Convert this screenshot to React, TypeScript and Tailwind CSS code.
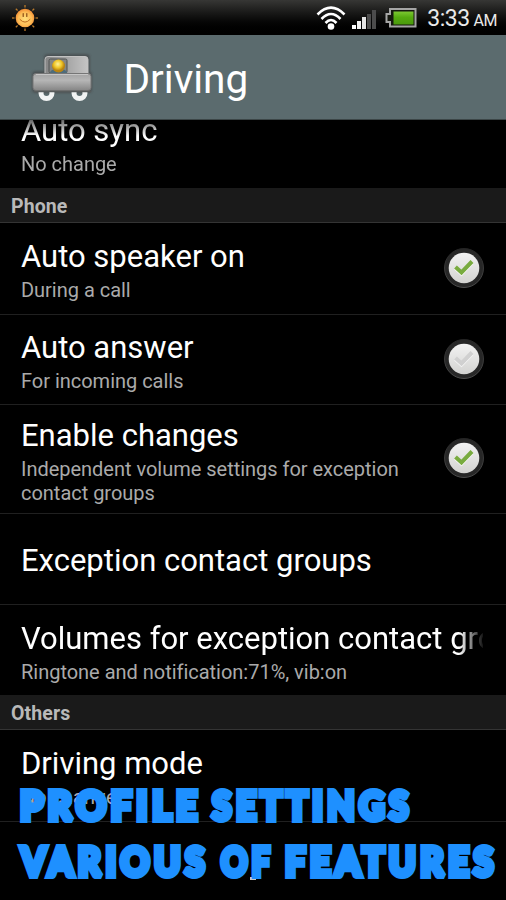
import { ReactNode } from "react";

function SunIcon() {
  const rays = [0, 45, 90, 135, 180, 225, 270, 315];
  return (
    <svg width="28" height="28" viewBox="0 0 28 28">
      <defs>
        <radialGradient id="sun" cx="50%" cy="55%" r="60%">
          <stop offset="0" stopColor="#ffdf7c" />
          <stop offset="0.6" stopColor="#fdbb54" />
          <stop offset="1" stopColor="#ee7d2a" />
        </radialGradient>
      </defs>
      {rays.map((r) => (
        <path key={r} d="M14 1v2.500" stroke="#b97a2c" strokeWidth="1.300" transform={`rotate(${r} 14 14)`} />
      ))}
      <circle cx="14" cy="14" r="9.300" fill="url(#sun)" />
      <path d="M12.200 9.500v3M15.800 9.500v3" stroke="#8a4b16" strokeWidth="1.200" strokeLinecap="round" />
      <path d="M9 15.500q5 5.500 10 0" stroke="#bd6a20" strokeWidth="1" fill="none" strokeLinecap="round" />
    </svg>
  );
}

function WifiIcon() {
  return (
    <svg width="30" height="26" viewBox="0 0 30 26" fill="none" stroke="#fff" strokeWidth="2.600">
      <path d="M1.500 9.500Q15-4 28.500 9.500" />
      <path d="M5.500 14Q15 4 24.500 14" />
      <path d="M9.500 18Q15 12 20.500 18" />
      <circle cx="15" cy="21.500" r="3.300" fill="#fff" stroke="none" />
    </svg>
  );
}

function SignalIcon() {
  return (
    <svg width="24" height="20" viewBox="0 0 24 20">
      <path d="M0 16h4v4H0z" fill="#fff" />
      <path d="M5 12h4v8H5z" fill="#f2f2f2" />
      <path d="M10 8h4v12h-4z" fill="#e4e4e4" />
      <path d="M15 5h4v15h-4z" fill="#4c4c4c" />
      <path d="M20 1h4v19h-4z" fill="#4c4c4c" />
    </svg>
  );
}

function BatteryIcon() {
  return (
    <svg width="32" height="20" viewBox="0 0 32 20">
      <defs>
        <linearGradient id="charge" x2="0" y2="1">
          <stop offset="0" stopColor="#7cc832" />
          <stop offset="0.45" stopColor="#55aa10" />
          <stop offset="1" stopColor="#4a9a0c" />
        </linearGradient>
      </defs>
      <path d="M5 1h25.500v17.500H5V14H1.500V6H5z" fill="#15170f" stroke="#a5a5a5" strokeWidth="2" />
      <path d="M8.500 3.500h20v13h-20z" fill="url(#charge)" />
    </svg>
  );
}

function CarIcon() {
  return (
    <svg width="68" height="56" viewBox="0 0 68 56">
      <defs>
        <linearGradient id="body" x2="0" y2="1">
          <stop offset="0" stopColor="#a2a2a2" />
          <stop offset="0.4" stopColor="#b6b6b6" />
          <stop offset="1" stopColor="#858585" />
        </linearGradient>
        <linearGradient id="cab">
          <stop offset="0" stopColor="#858585" />
          <stop offset="1" stopColor="#c4c4c4" />
        </linearGradient>
        <radialGradient id="head" cx="45%" cy="35%">
          <stop offset="0" stopColor="#fff39a" />
          <stop offset="0.6" stopColor="#efc526" />
          <stop offset="1" stopColor="#b98412" />
        </radialGradient>
        <filter id="glow" x="-20%" y="-20%" width="140%" height="140%">
          <feGaussianBlur stdDeviation="1.300" />
        </filter>
      </defs>
      <g filter="url(#glow)" fill="#4b5152">
        <rect x="14" y="3" width="46" height="22" rx="4" />
        <rect x="2" y="20" width="60" height="22" rx="4" />
      </g>
      <g fill="none" stroke="#f1f3f3" strokeWidth="5">
        <circle cx="16.500" cy="42" r="5.500" />
        <circle cx="49.500" cy="42" r="5.500" />
      </g>
      <rect x="15" y="5.500" width="43" height="20" rx="3" fill="url(#cab)" stroke="#c2c2c2" />
      <rect x="19" y="8" width="18" height="14" rx="1.500" fill="#858684" stroke="#505352" />
      <path d="M20 22q0-4 8.500-4t8.500 4z" fill="#4d6c7c" />
      <circle cx="28.500" cy="15" r="6.500" fill="url(#head)" />
      <rect x="3" y="22.500" width="58" height="17" rx="3" fill="url(#body)" stroke="#767676" />
      <path d="M6 23.500h52" stroke="#c6c6c6" />
      <path d="M4 40.500h57" stroke="#575b5b" strokeWidth="1.500" />
    </svg>
  );
}

function Check({ on }: { on: boolean }) {
  return (
    <svg className="shrink-0" width="42" height="42" viewBox="0 0 42 42">
      <defs>
        <linearGradient id="knob" x2="0" y2="1">
          <stop offset="0" stopColor="#f2f2f2" />
          <stop offset="1" stopColor="#d3d3d1" />
        </linearGradient>
        <linearGradient id="ring" x2="0" y2="1">
          <stop offset="0" stopColor="#242424" />
          <stop offset="1" stopColor="#4c4c4c" />
        </linearGradient>
      </defs>
      <circle cx="21" cy="21" r="19.500" fill="#272727" stroke="url(#ring)" />
      <circle cx="21" cy="21" r="15.300" fill="url(#knob)" />
      <path d="M12.500 20l6 5.500L29 14.500" transform="translate(0 1)" fill="none" stroke={on ? "#fafafa" : "#f6f6f6"} strokeWidth="4" />
      <path d="M12.500 20l6 5.500L29 14.500" fill="none" stroke={on ? "#78ab3f" : "#d0d0d0"} strokeWidth="4" />
    </svg>
  );
}

function SectionHeader({ title }: { title: string }) {
  return (
    <div className="h-[35px] shrink-0 border-b border-[#343434] bg-[#1a1a1a] pl-[11px] text-[19.500px] leading-[38px] font-bold tracking-[0.1px] text-[#b9b9b9]">
      {title}
    </div>
  );
}

type RowProps = {
  title: ReactNode;
  summary?: string;
  checked?: boolean;
  className: string;
};

function Row({ title, summary, checked, className }: RowProps) {
  return (
    <div className={`flex shrink-0 items-center border-[#202020] pl-[21px] ${className}`}>
      <div className={summary ? "min-w-0 flex-1 pt-[5px]" : "min-w-0 flex-1 pt-[3px]"}>
        <div className="text-[31px] leading-[36px] whitespace-nowrap text-white">{title}</div>
        {summary && (
          <div className="pt-[4px] text-[20px] leading-[23.500px] tracking-[-0.02px] text-[#aaa]">{summary}</div>
        )}
      </div>
      {checked !== undefined && (
        <div className="pr-[21px] pb-[2px]">
          <Check on={checked} />
        </div>
      )}
    </div>
  );
}

const captionWords = [
  { text: "PROFILE", x: 20, y: 32.5, width: 182 },
  { text: "SETTINGS", x: 212, y: 32.5, width: 201 },
  { text: "VARIOUS", x: 21, y: 88.5, width: 188 },
  { text: "OF", x: 221, y: 88.5, width: 53 },
  { text: "FEATURES", x: 285, y: 88.5, width: 213 },
];

function Caption() {
  return (
    <svg className="absolute top-[787px] left-0" width="506" height="100">
      <g
        fill="#1e90ff"
        stroke="#1e90ff"
        strokeWidth="6"
        strokeMiterlimit="2"
        className="font-['Lato',sans-serif] text-[40.500px] font-black tracking-[5px]"
      >
        {captionWords.map((w) => (
          <text key={w.text} x={w.x} y={w.y} textLength={w.width} lengthAdjust="spacingAndGlyphs">
            {w.text}
          </text>
        ))}
      </g>
    </svg>
  );
}

export default function App() {
  return (
    <div className="relative flex h-[900px] w-[506px] flex-col overflow-hidden bg-black font-['Roboto',sans-serif]">
      <div className="flex h-[35px] shrink-0 items-center bg-linear-to-b from-[#373735] to-black pl-[11px] pr-[9px]">
        <SunIcon />
        <div className="ml-auto flex items-center">
          <WifiIcon />
          <div className="ml-[6px] pt-[3px]">
            <SignalIcon />
          </div>
          <div className="ml-[9px]">
            <BatteryIcon />
          </div>
          <div className="ml-[10px] flex items-baseline gap-[4px] pt-[3px] text-[#e9e9e9]">
            <span className="text-[23px] tracking-[-0.5px]">3:33</span>
            <span className="text-[16px] tracking-[-0.5px]">AM</span>
          </div>
        </div>
      </div>

      <div className="flex h-[85px] shrink-0 items-center border-b border-[#3c4647] bg-[#5b6b6e] pt-[4px] pl-[30px]">
        <CarIcon />
        <div className="pl-[25.500px] text-[40.500px] leading-[46px] text-white">Driving</div>
      </div>

      <div className="h-[68px] shrink-0 overflow-hidden">
        <div className="-mt-[13px] mask-linear-[180deg,#0006_13px,#000_29px]">
          <Row title="Auto sync" summary="No change" className="h-[70px]" />
        </div>
      </div>
      <SectionHeader title="Phone" />
      <Row title="Auto speaker on" summary="During a call" checked={true} className="h-[92px] border-b" />
      <Row title="Auto answer" summary="For incoming calls" checked={false} className="h-[90px] border-b" />
      <Row
        title="Enable changes"
        summary="Independent volume settings for exception contact groups"
        checked={true}
        className="h-[109px] border-b"
      />
      <Row title="Exception contact groups" className="h-[91px] border-b" />
      <Row
        title={
          <div className="w-[462px] overflow-hidden mask-r-from-[438px] mask-r-to-[464px]">
            Volumes for exception contact groups
          </div>
        }
        summary="Ringtone and notification:71%, vib:on"
        className="h-[90px]"
      />
      <SectionHeader title="Others" />
      <Row title="Driving mode" summary="No change" className="h-[92px] border-b" />
      <div className="mt-[55px] ml-[250px] h-[3px] w-[6px] bg-[#c8c8c8]" />

      <Caption />
    </div>
  );
}
